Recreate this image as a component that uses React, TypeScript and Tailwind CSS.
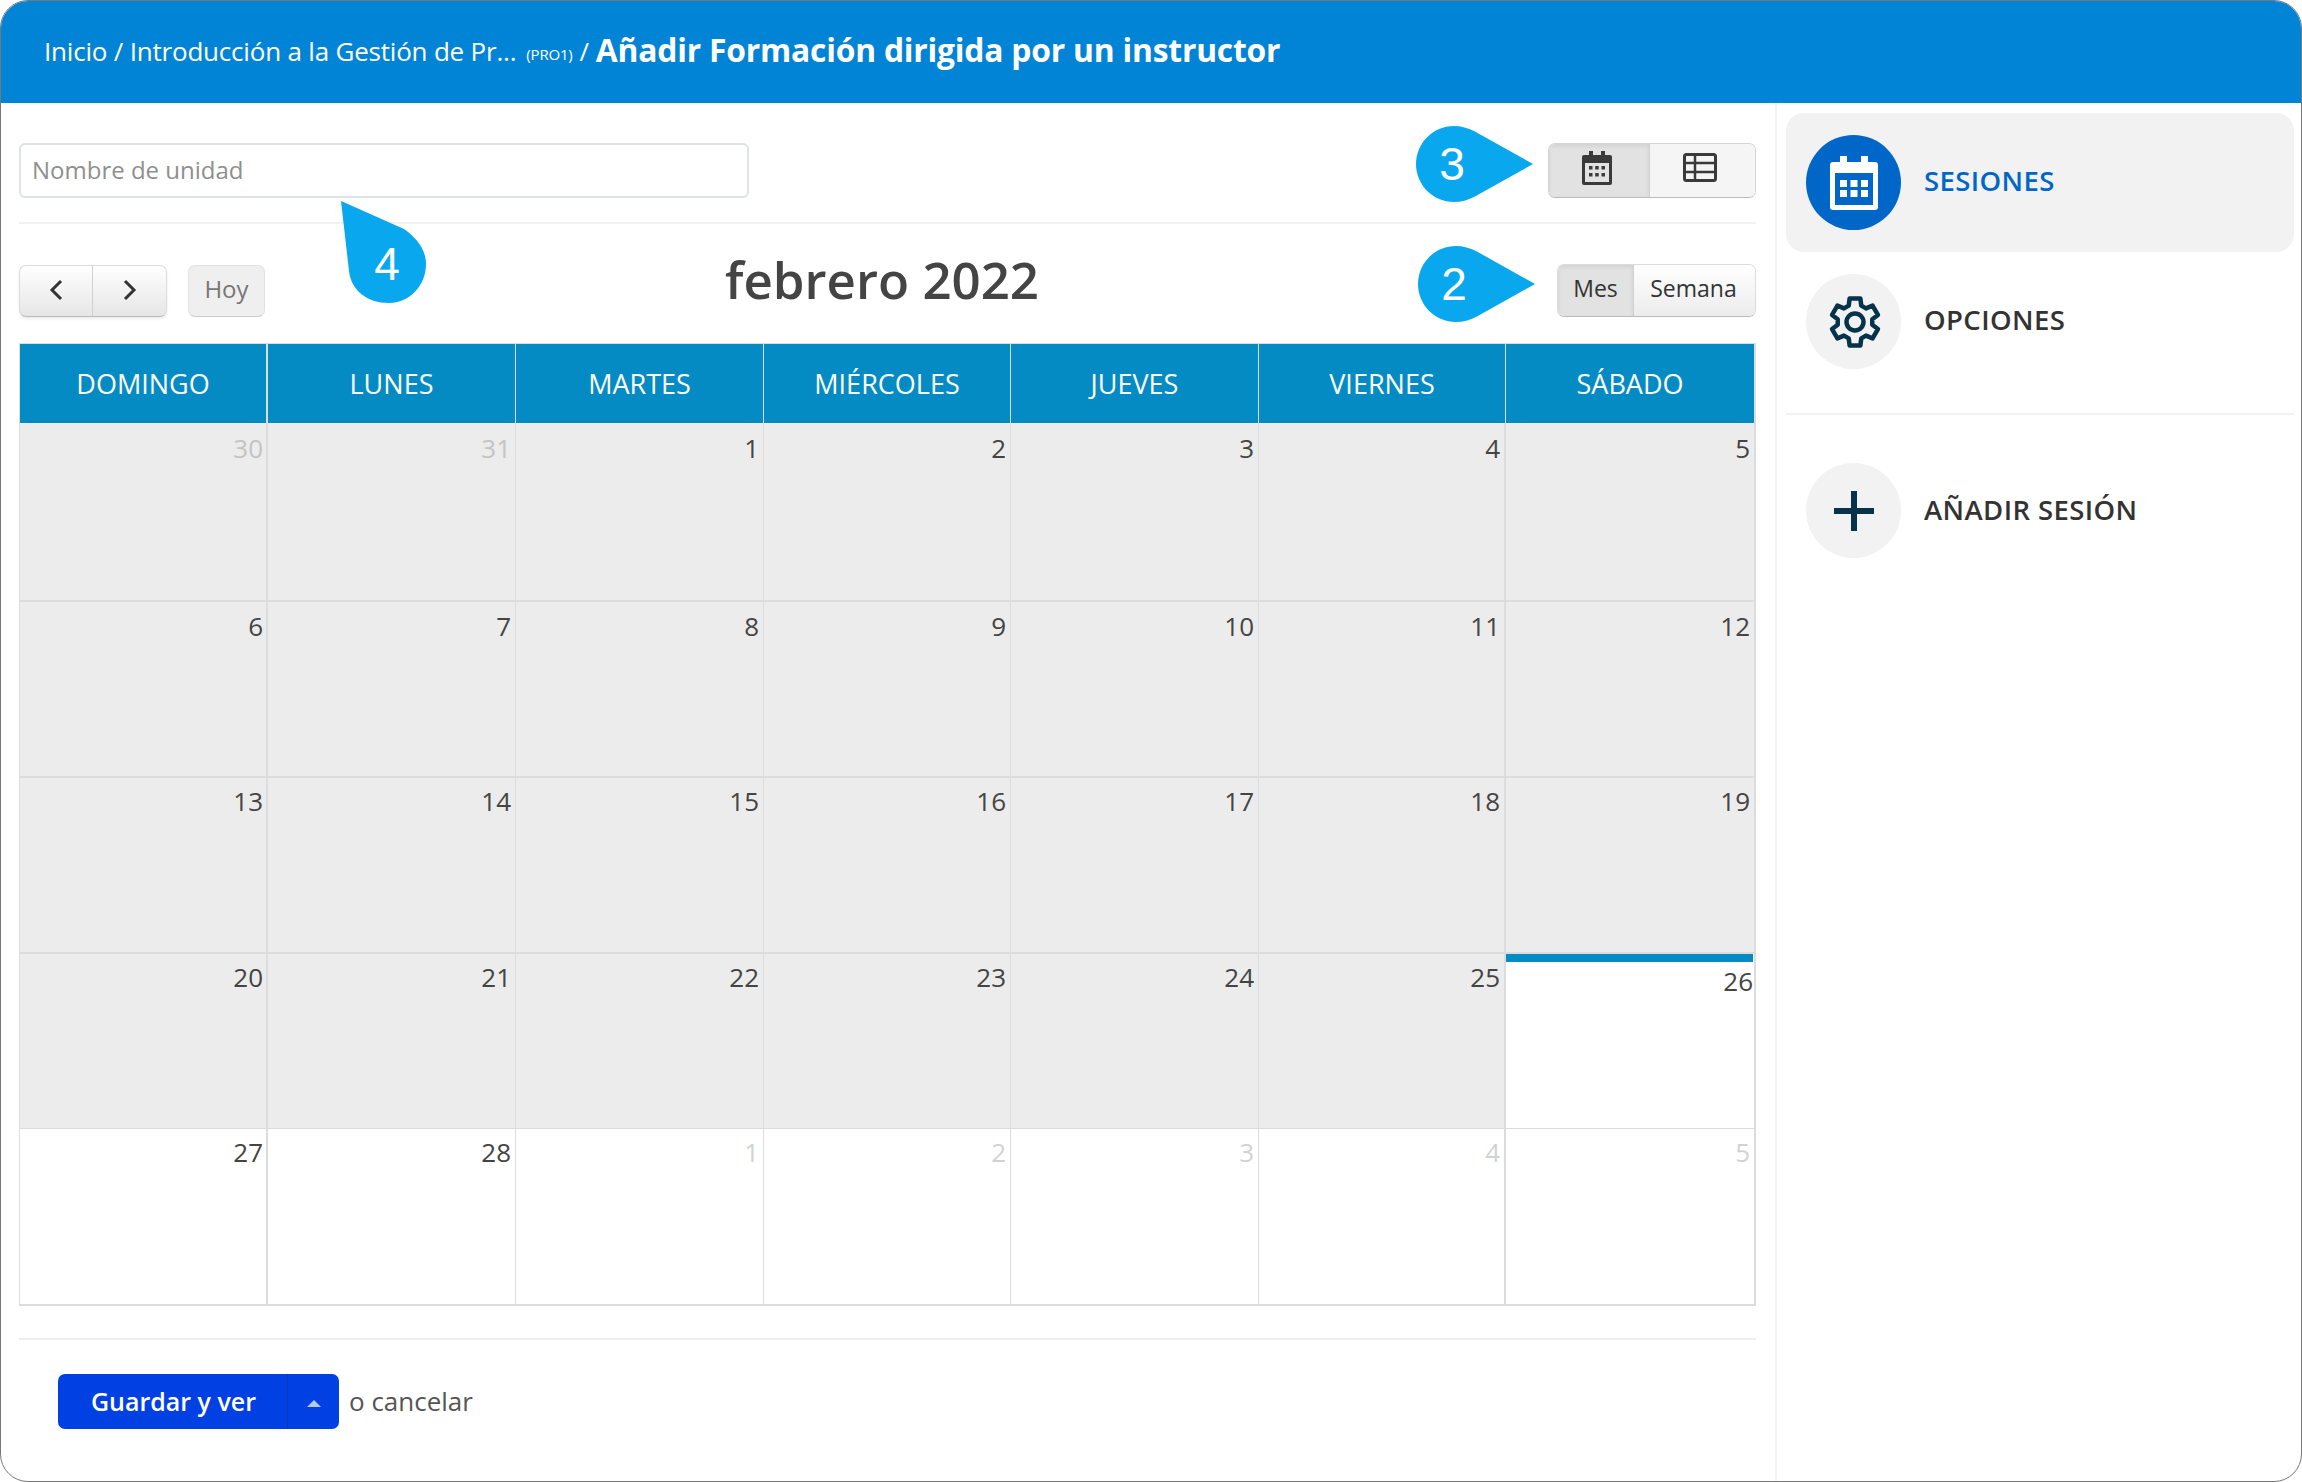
const days = ['DOMINGO', 'LUNES', 'MARTES', 'MIÉRCOLES', 'JUEVES', 'VIERNES', 'SÁBADO']

// [number, muted, past]
const weeks: [number, boolean, boolean][][] = [
  [[30, true, true], [31, true, true], [1, false, true], [2, false, true], [3, false, true], [4, false, true], [5, false, true]],
  [[6, false, true], [7, false, true], [8, false, true], [9, false, true], [10, false, true], [11, false, true], [12, false, true]],
  [[13, false, true], [14, false, true], [15, false, true], [16, false, true], [17, false, true], [18, false, true], [19, false, true]],
  [[20, false, true], [21, false, true], [22, false, true], [23, false, true], [24, false, true], [25, false, true], [26, false, false]],
  [[27, false, false], [28, false, false], [1, true, false], [2, true, false], [3, true, false], [4, true, false], [5, true, false]],
]

const rowPadding = ['pt-[7px]', 'pt-[6px]', 'pt-[5px]', 'pt-[5px]', 'pt-[5px]']

// six flat teeth, one pointing straight up
const gearPoints = [0, 60, 120, 180, 240, 300]
  .flatMap((a) =>
    [[-21, 17.5], [-13, 24], [13, 24], [21, 17.5]].map(([d, r]) => {
      const t = ((a + d - 90) * Math.PI) / 180
      return `${(28 + r * Math.cos(t)).toFixed(2)},${(28 + r * Math.sin(t)).toFixed(2)}`
    })
  )
  .join(' ')

const Callout = ({ n, className }: { n: string; className: string }) => (
  <div className={`absolute w-[120px] h-[78px] ${className}`}>
    <svg viewBox="0 0 120 78" className="w-full h-full">
      <path d="M39 1 C46 1 53 3 59 6 L118 39 L59 72 C53 75 46 77 39 77 C18 77 1 60 1 39 C1 18 18 1 39 1 Z" fill="#09a8ee" />
    </svg>
    <span className="absolute left-0 top-0 w-[74px] h-[78px] flex items-center justify-center text-[46px] text-white font-['Liberation_Sans',sans-serif]">{n}</span>
  </div>
)

const App = () => {
  return (
    <div className="relative w-[2302px] h-[1482px] bg-white border border-[#777] rounded-[28px] overflow-hidden font-['Open_Sans',sans-serif] text-[#444]">
      {/* Header */}
      <div className="h-[102px] bg-[#0284d6] flex items-center pl-[43px] pb-[2px] text-white text-[26px] tracking-[-0.2px] whitespace-nowrap">
        <span>Inicio / Introducción a la Gestión de Pr...</span>
        <span className="text-[15px] ml-[10px] mt-[6px]">(PRO1)</span>
        <span className="ml-[7px]">/</span>
        <span className="ml-[7px] font-bold text-[31.8px] -mt-[3px]">Añadir Formación dirigida por un instructor</span>
      </div>

      <div className="flex h-[1378px]">
        {/* Main */}
        <div className="w-[1776px] border-r-2 border-[#f4f4f4] pl-[18px] pr-[19px] pt-[40px]">
          <div className="flex justify-between items-center h-[55px]">
            <div className="w-[730px] h-[55px] border-2 border-[#dfe3e6] rounded-[6px] flex items-center pl-[11px] pb-[2px] text-[24px] text-[#8f8f8f]">
              Nombre de unidad
            </div>
            <div className="flex w-[208px] h-[55px] rounded-[7px] border border-[#d4d4d4] border-b-[#bbb] overflow-hidden">
              <div className="w-[101px] bg-[#e2e2e2] border-r border-[#d0d0d0] flex items-center justify-center pr-[5px] pb-[6px] shadow-[inset_0_2px_4px_rgba(0,0,0,0.08)]">
                <svg viewBox="0 0 30 34" className="w-[30px] h-[34px]">
                  <path d="M7 0h4v4h8V0h4v4h5a2 2 0 0 1 2 2v26a2 2 0 0 1-2 2H2a2 2 0 0 1-2-2V6a2 2 0 0 1 2-2h5zM3 12v19h24V12z" fill="#3a3a3a" fillRule="evenodd" />
                  <g fill="#3a3a3a">
                    <rect x="7" y="15" width="3.5" height="3.5" /><rect x="13.2" y="15" width="3.5" height="3.5" /><rect x="19.5" y="15" width="3.5" height="3.5" />
                    <rect x="7" y="22" width="3.5" height="3.5" /><rect x="13.2" y="22" width="3.5" height="3.5" /><rect x="19.5" y="22" width="3.5" height="3.5" />
                  </g>
                </svg>
              </div>
              <div className="flex-1 bg-[#f5f5f5] flex items-center justify-center pr-[6px] pb-[6px]">
                <svg viewBox="0 0 34 29" className="w-[34px] h-[29px]">
                  <rect x="1.5" y="1.5" width="31" height="26" rx="2" fill="none" stroke="#3a3a3a" strokeWidth="3" />
                  <path d="M1 10h32M1 19h32M12 1v27" stroke="#3a3a3a" strokeWidth="2.5" fill="none" />
                </svg>
              </div>
            </div>
          </div>

          <div className="h-[2px] bg-[#f2f2f2] mt-[24px]" />

          <div className="flex items-center h-[53px] mt-[40px]">
            <div className="flex w-[148px] h-[52px] rounded-[7px] border border-[#dcdcdc] border-b-[#bbb] overflow-hidden bg-gradient-to-b from-white to-[#e6e6e6] shadow-[0_2px_3px_rgba(0,0,0,0.08)]">
              <div className="w-[73px] border-r border-[#d0d0d0] flex items-center justify-center pb-[2px]">
                <svg viewBox="0 0 16 22" className="w-[16px] h-[22px]"><path d="M13 2 4 11l9 9" fill="none" stroke="#333" strokeWidth="3" /></svg>
              </div>
              <div className="flex-1 flex items-center justify-center pb-[2px]">
                <svg viewBox="0 0 16 22" className="w-[16px] h-[22px]"><path d="M3 2l9 9-9 9" fill="none" stroke="#333" strokeWidth="3" /></svg>
              </div>
            </div>
            <div className="ml-[21px] w-[77px] h-[52px] rounded-[7px] border border-[#e2e2e2] border-b-[#ccc] bg-[#efefef] flex items-center justify-center pb-[4px] text-[24px] text-[#777]">
              Hoy
            </div>
            <div className="ml-[460px] text-[51px] leading-none font-semibold text-[#444] -mt-[22px] whitespace-nowrap">febrero 2022</div>
            <div className="ml-auto flex w-[199px] h-[53px] rounded-[7px] border border-[#dcdcdc] border-b-[#bbb] overflow-hidden text-[23px] text-[#333]">
              <div className="w-[76px] bg-[#e2e2e2] border-r border-[#d0d0d0] flex items-center justify-center pb-[4px] shadow-[inset_0_2px_4px_rgba(0,0,0,0.08)]">Mes</div>
              <div className="flex-1 bg-gradient-to-b from-white to-[#ececec] flex items-center justify-center pb-[4px] pr-[2px]">Semana</div>
            </div>
          </div>

          {/* Calendar */}
          <div className="mt-[26px] border-t border-l border-[#dcdcdc] w-[1737px]">
            <div className="grid grid-cols-[248px_248px_248px_247px_248px_247px_1fr] h-[79px] bg-[#058bc4] text-white text-[27px]">
              {days.map((d, i) => (
                <div key={d} className={`flex items-center justify-center pt-[2px] border-[#dcdcdc] ${i === 0 || i === 6 ? 'border-r-2' : 'border-r'}`}>{d}</div>
              ))}
            </div>
            <div className="grid grid-cols-[248px_248px_248px_247px_248px_247px_1fr] grid-rows-[179px_176px_176px_175px_177px]">
              {weeks.map((week, w) =>
                week.map(([n, muted, past], c) => {
                  const today = w === 3 && c === 6
                  return (
                    <div
                      key={`${w}-${c}`}
                      className={`${past ? 'bg-[#ececec]' : 'bg-white'} border-[#dcdcdc] text-right text-[26px] leading-[36px] ${c === 0 || c >= 5 ? 'border-r-2' : 'border-r'} ${w === 3 ? 'border-b' : 'border-b-2'} ${muted ? (past ? 'text-[#c4c4c4]' : 'text-[#d2d2d2]') : 'text-[#444]'} ${today ? 'pr-[1px] pt-0' : `${c === 0 ? 'pr-[3px]' : 'pr-[4px]'} ${rowPadding[w]}`}`}
                    >
                      {today && <div className="h-[8px] bg-[#058bc4] mb-[1px]" />}
                      {n}
                    </div>
                  )
                })
              )}
            </div>
          </div>

          <div className="h-[2px] bg-[#eeeeee] mt-[32px]" />

          <div className="flex items-center mt-[34px] ml-[39px]">
            <div className="flex w-[281px] h-[55px] bg-[#0140e3] rounded-[7px] text-white font-semibold text-[25px]">
              <div className="w-[230px] border-r border-[#0a36b8] flex items-center justify-center pl-[2px]">Guardar y ver</div>
              <div className="flex-1 flex items-center justify-center">
                <div className="w-0 h-0 border-x-[7px] border-x-transparent border-b-[7px] border-b-[#b5c6f7] mt-[4px]" />
              </div>
            </div>
            <span className="ml-[10px] text-[26px] text-[#555]">o cancelar</span>
          </div>
        </div>

        {/* Sidebar */}
        <div className="flex-1 pl-[9px] pr-[7px] pt-[10px] text-[27.5px] tracking-[0.4px]">
          <div className="h-[139px] bg-[#f2f2f2] rounded-[18px] flex items-center pl-[20px]">
            <div className="w-[95px] h-[95px] rounded-full bg-[#0067c8] flex items-center justify-center">
              <svg viewBox="0 0 48 54" className="w-[48px] h-[54px] mt-[1px]">
                <path d="M10 0h7v6h14V0h7v6h7a3 3 0 0 1 3 3v42a3 3 0 0 1-3 3H3a3 3 0 0 1-3-3V9a3 3 0 0 1 3-3h7zM5 17v32h38V17z" fill="#fff" fillRule="evenodd" />
                <g fill="#fff">
                  <rect x="10" y="24" width="7" height="7" /><rect x="20.5" y="24" width="7" height="7" /><rect x="31" y="24" width="7" height="7" />
                  <rect x="10" y="34" width="7" height="7" /><rect x="20.5" y="34" width="7" height="7" /><rect x="31" y="34" width="7" height="7" />
                </g>
              </svg>
            </div>
            <span className="ml-[23px] pb-[3px] text-[#0067c8] font-[550]">SESIONES</span>
          </div>

          <div className="flex items-center pl-[20px] mt-[22px]">
            <div className="w-[95px] h-[95px] rounded-full bg-[#f2f2f2] flex items-center justify-center pl-[2px]">
              <svg viewBox="0 0 56 56" className="w-[56px] h-[56px]">
                <polygon points={gearPoints} fill="none" stroke="#05344a" strokeWidth="4.5" strokeLinejoin="round" />
                <circle cx="28" cy="28" r="8.5" fill="none" stroke="#05344a" strokeWidth="4.5" />
              </svg>
            </div>
            <span className="ml-[23px] pb-[4px] text-[#333] font-[550]">OPCIONES</span>
          </div>

          <div className="h-[2px] bg-[#f2f2f2] mt-[44px]" />

          <div className="flex items-center pl-[20px] mt-[48px]">
            <div className="w-[95px] h-[95px] rounded-full bg-[#f2f2f2] flex items-center justify-center">
              <svg viewBox="0 0 40 40" className="w-[40px] h-[40px]"><path d="M20 0v40M0 20h40" stroke="#05344a" strokeWidth="6" /></svg>
            </div>
            <span className="ml-[23px] pb-[2px] text-[#333] font-[550]">AÑADIR SESIÓN</span>
          </div>
        </div>
      </div>

      {/* Callouts */}
      <Callout n="3" className="left-[1414px] top-[124px]" />
      <Callout n="2" className="left-[1416px] top-[244px]" />
      <div className="absolute left-[338px] top-[199px] w-[90px] h-[104px]">
        <svg viewBox="0 0 90 104" className="w-full h-full">
          <path d="M2 1 L65 29 C78 38 87 50 87 64 C87 86 70 103 50 103 C28 103 12 90 10 71 Z" fill="#09a8ee" />
        </svg>
        <span className="absolute left-[10px] top-[25px] w-[76px] h-[78px] flex items-center justify-center text-[46px] text-white font-['Liberation_Sans',sans-serif]">4</span>
      </div>
    </div>
  )
}

export default App
